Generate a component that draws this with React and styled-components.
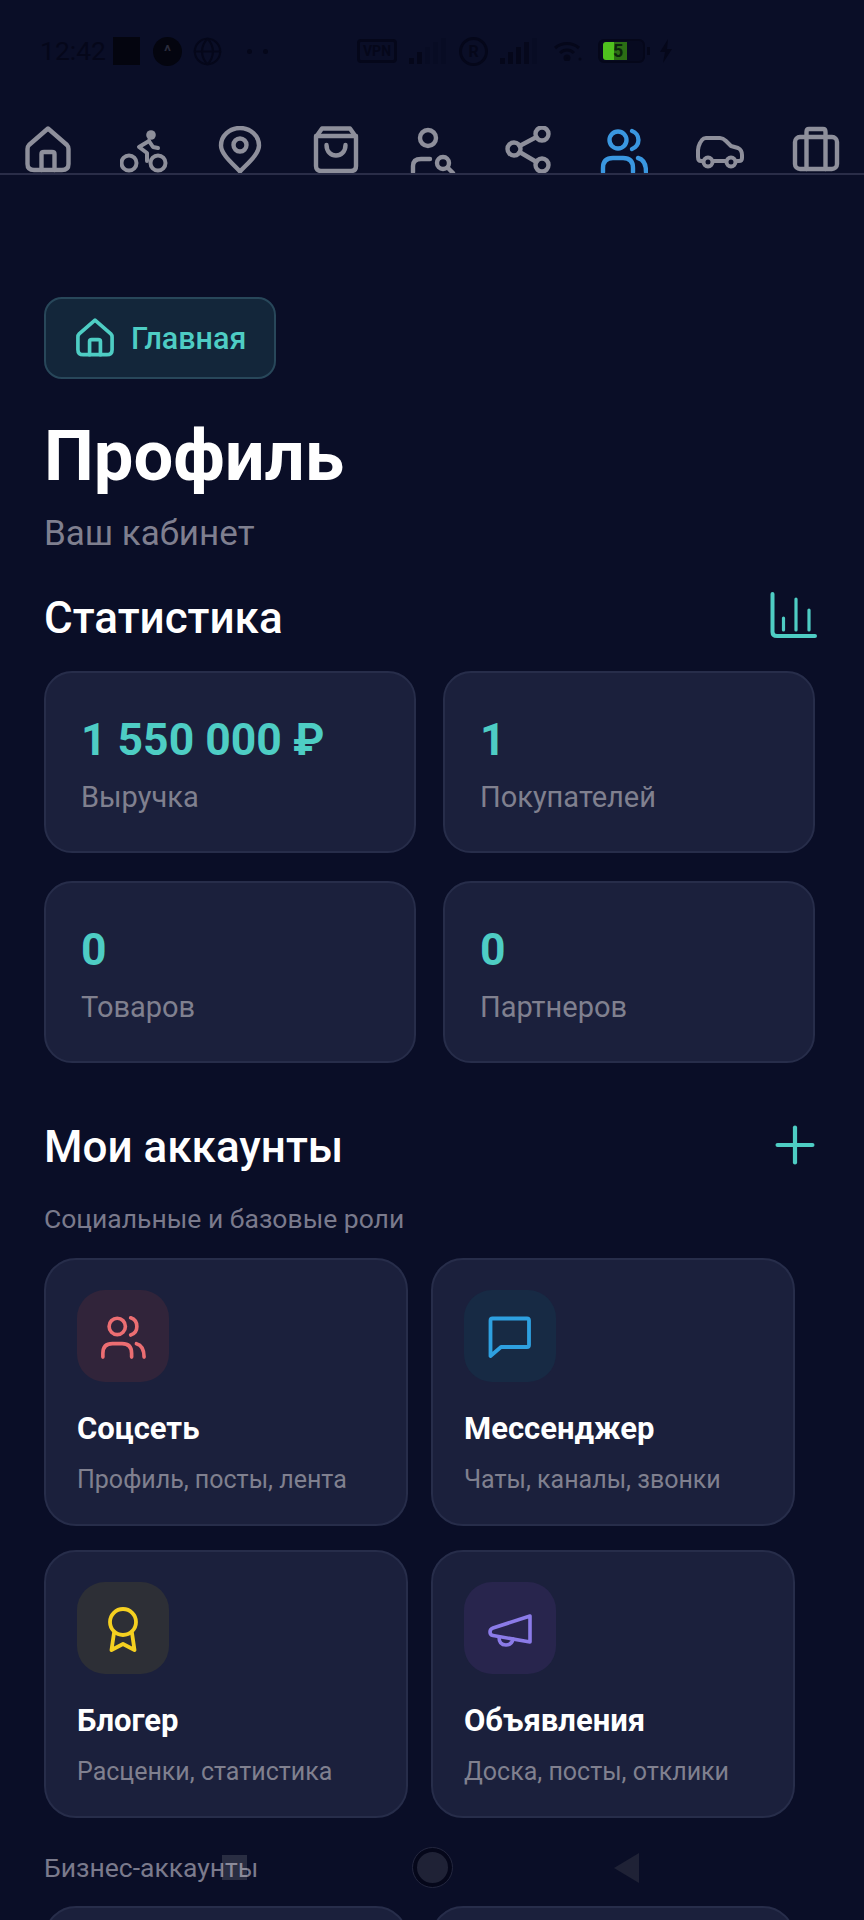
import React from 'react'
import styled, { createGlobalStyle } from 'styled-components'

const GlobalStyle = createGlobalStyle`
  * { box-sizing: border-box; }
  html, body { margin: 0; padding: 0; background: #0a0e27; }
  body { font-family: Roboto, "Liberation Sans", sans-serif; }
`

const Page = styled.div`
  position: relative;
  width: 864px;
  height: 1920px;
  overflow: hidden;
  background: #0a0e27;
  color: #fff;
`

const StatusBar = styled.div`
  display: flex;
  align-items: center;
  height: 30px;
  margin-top: 36px;
  padding-left: 40px;
  color: #05071a;
`

const StatusTime = styled.span`
  width: 66px;
  font-size: 26.5px;
  line-height: 30px;
`

const StatusSquare = styled.div`
  width: 27px;
  height: 28px;
  margin: 0 13px 0 7px;
  background: #04050f;
`

const StatusBadge = styled.div`
  display: flex;
  align-items: center;
  justify-content: center;
  width: 29px;
  height: 29px;
  margin-right: 11px;
  border-radius: 50%;
  background: ${(p) => (p.$solid ? '#04050f' : 'transparent')};
  border: ${(p) => (p.$solid ? 'none' : '3px solid #05071a')};
  color: ${(p) => (p.$solid ? '#2a2c3c' : '#05071a')};
  font-size: 16px;
  font-weight: 700;
`

const StatusDots = styled.div`
  display: flex;
  gap: 11px;
  width: 110px;
  margin-left: 25px;
`

const StatusDot = styled.span`
  width: 5px;
  height: 5px;
  border-radius: 50%;
  background: #05071a;
`

const VpnBox = styled.div`
  display: flex;
  align-items: center;
  justify-content: center;
  width: 40px;
  height: 24px;
  border: 3px solid #05071a;
  border-radius: 4px;
  font-size: 14px;
  font-weight: 700;
`

const Battery = styled.div`
  position: relative;
  display: flex;
  align-items: center;
  width: 47px;
  height: 24px;
  padding: 0 3px;
  border: 2px solid #05071a;
  border-radius: 6px;
  background: #070a20;

  &::after {
    content: '';
    position: absolute;
    right: -7px;
    top: 6px;
    width: 3px;
    height: 8px;
    background: #05071a;
  }
`

const BatteryFill = styled.div`
  width: 24px;
  height: 18px;
  padding-left: 10px;
  border-radius: 3px 0 0 3px;
  background: linear-gradient(90deg, #4fc21e 45%, #2c6e14 45%);
  color: #0b240c;
  font-size: 18px;
  line-height: 18px;
  font-weight: 700;
`

const StatusGap = styled.div`
  width: ${(p) => p.$w}px;
  flex: none;
`

const TabRow = styled.div`
  display: flex;
  height: 49px;
  margin-top: 60px;
  border-bottom: 2px solid #2a2d48;
`

const Tab = styled.div`
  display: flex;
  justify-content: center;
  width: 96px;
  height: 47px;
  overflow: hidden;
  color: ${(p) => (p.$active ? '#3a97e0' : '#8e8f9b')};
`

const Content = styled.main`
  padding: 122px 0 0 44px;
`

const HomeChip = styled.div`
  display: inline-flex;
  align-items: center;
  gap: 16px;
  height: 82px;
  padding: 0 28px 0 29px;
  background: #13263a;
  border: 2px solid #28475a;
  border-radius: 18px;
  color: #4ecdc4;
  font-size: 30.5px;
  font-weight: 500;
`

const Title = styled.h1`
  margin: 37px 0 0;
  font-size: 70.5px;
  line-height: 80px;
  font-weight: 700;
`

const Subtitle = styled.p`
  margin: 18px 0 0;
  font-size: 35px;
  line-height: 40px;
  color: #7f7f8f;
`

const SectionHeader = styled.div`
  display: flex;
  align-items: flex-start;
  justify-content: space-between;
  width: 772px;
  margin-top: ${(p) => p.$top}px;
`

const SectionTitle = styled.h2`
  margin: ${(p) => p.$offset || 0}px 0 0;
  font-size: 44px;
  line-height: 48px;
  font-weight: 500;
`

const HeaderIcon = styled.div`
  display: flex;
  margin-right: ${(p) => p.$right || 0}px;
  color: #4ecdc4;
`

const StatGrid = styled.div`
  display: grid;
  grid-template-columns: 372px 372px;
  gap: 28px 27px;
  margin-top: 29px;
`

const StatCard = styled.div`
  padding: 41px 35px 36px;
  background: #1b203c;
  border: 2px solid #272d4a;
  border-radius: 28px;
`

const StatValue = styled.div`
  font-size: 44.5px;
  line-height: 52px;
  font-weight: 700;
  color: #4ecdc4;
`

const StatLabel = styled.div`
  margin-top: 13px;
  font-size: 29px;
  line-height: 36px;
  color: #80808f;
`

const GroupLabel = styled.div`
  margin-top: ${(p) => p.$top}px;
  font-size: 26.5px;
  line-height: 32px;
  color: #7a7a8c;
`

const AccountGrid = styled.div`
  display: grid;
  grid-template-columns: 364px 364px;
  gap: 24px 23px;
  margin-top: ${(p) => p.$top}px;
`

const AccountCard = styled.div`
  height: ${(p) => (p.$empty ? '100px' : 'auto')};
  padding: 30px 31px 29px;
  background: #1b203c;
  border: 2px solid #272d4a;
  border-radius: 32px;
`

const AccountIcon = styled.div`
  display: flex;
  align-items: center;
  justify-content: center;
  width: 92px;
  height: 92px;
  border-radius: 28px;
  background: ${(p) => p.$bg};
  color: ${(p) => p.$color};
`

const AccountName = styled.div`
  margin-top: 29px;
  font-size: 31px;
  line-height: 36px;
  font-weight: 700;
`

const AccountDesc = styled.div`
  margin-top: 18px;
  font-size: 25px;
  line-height: 30px;
  color: #80808f;
`

const SystemNav = styled.div`
  position: absolute;
  left: 222px;
  bottom: 33px;
  display: flex;
  align-items: center;
`

const NavSquare = styled.div`
  width: 25px;
  height: 25px;
  margin-right: 166px;
  background: rgba(255, 255, 255, 0.13);
`

const NavCircle = styled.div`
  width: 39px;
  height: 39px;
  margin-right: 162px;
  border-radius: 50%;
  background: #1f2236;
  border: 4px solid #05071a;
  outline: 1px solid #23263d;
`

const NavTriangle = styled.div`
  width: 0;
  height: 0;
  border-style: solid;
  border-width: 15px 25px 15px 0;
  border-color: transparent #1f2236 transparent transparent;
`

const Svg = ({ size = 48, sw = 4.4, children }) => (
  <svg
    width={size}
    height={size}
    viewBox="0 0 48 48"
    fill="none"
    stroke="currentColor"
    strokeWidth={sw}
    strokeLinecap="round"
    strokeLinejoin="round"
  >
    {children}
  </svg>
)

const HomeIcon = (props) => (
  <Svg {...props}>
    <path d="M24 2.5 5 19q-1.500 1.500-1.500 4v15q0 6 6.500 6h28q6.500 0 6.500-6V23q0-2.500-1.500-4z" />
    <path d="M17.500 44V28q0-2 2.500-2h8q2.500 0 2.500 2v16" />
  </Svg>
)

const BikeIcon = () => (
  <Svg sw={4}>
    <circle cx="9" cy="37" r="7.500" />
    <circle cx="38" cy="37" r="7.500" />
    <circle cx="31" cy="9" r="4.800" fill="currentColor" stroke="none" />
    <path d="M29 15 19 21l8 6v8" />
    <path d="m29 15 4 6 5 1" />
  </Svg>
)

const PinIcon = () => (
  <Svg>
    <path d="M24 45.500C16 37 5 28 5 19.500a19 17.500 0 0 1 38 0C43 28 32 37 24 45.500z" />
    <circle cx="24" cy="19" r="6.500" />
  </Svg>
)

const BagIcon = () => (
  <Svg>
    <path d="M10 2.500h28L44 11v29q0 5-5 5H9q-5 0-5-5V11z" />
    <path d="M4 10h40" />
    <path d="M14.500 19c0 14 19 14 19 0" />
  </Svg>
)

const UserSearchIcon = () => (
  <Svg>
    <circle cx="20" cy="12" r="8" />
    <path d="M5 46v-6q0-7 8-7h9" />
    <circle cx="35" cy="37" r="6" />
    <path d="m40 42 5 5" />
  </Svg>
)

const ShareIcon = () => (
  <Svg>
    <circle cx="38" cy="8" r="6.500" />
    <circle cx="10" cy="23" r="6.500" />
    <circle cx="38" cy="39" r="6.500" />
    <path d="m15.500 20 17-9" />
    <path d="m15.500 26 17 10" />
  </Svg>
)

const UsersIcon = (props) => (
  <Svg {...props}>
    <circle cx="18" cy="14" r="8.500" />
    <path d="M32 5a9.500 9.500 0 0 1 0 18" />
    <path d="M3 46v-4q0-10 10-10h10q10 0 10 10v4" />
    <path d="M38 32q8 2 8 14" />
  </Svg>
)

const CarIcon = () => (
  <Svg sw={4}>
    <path d="M7 35H5q-3 0-3-4v-7q0-3 2-7l2-3q1.500-2 4-2h14q3 0 6 3l5 5 7 2q4 2 4 7v3q0 3-3 3h-2" />
    <path d="M18 35h11" />
    <circle cx="12" cy="36" r="4.500" />
    <circle cx="35" cy="36" r="4.500" />
  </Svg>
)

const CaseIcon = () => (
  <Svg>
    <rect x="3" y="11" width="42" height="32" rx="5" />
    <path d="M14.500 43V6q0-3 2.500-3h14q2.500 0 2.500 3v37" />
  </Svg>
)

const ChartIcon = () => (
  <Svg sw={3.200}>
    <path d="M2.500 2v38q0 4 4.500 4h38" strokeWidth="4" />
    <path d="M13.500 26v12" />
    <path d="M26 7v31" />
    <path d="M39 18v20" />
  </Svg>
)

const PlusIcon = () => (
  <Svg size={44} sw={4.600}>
    <path d="M24 5v38" />
    <path d="M5 24h38" />
  </Svg>
)

const MessageIcon = () => (
  <Svg sw={3.800}>
    <path d="M6.500 6.500H41q2 0 2 2V33q0 2-2 2H15L4.500 44V8.500q0-2 2-2z" />
  </Svg>
)

const AwardIcon = () => (
  <Svg sw={3.800}>
    <circle cx="24" cy="18" r="13" />
    <path d="M15 29 12.500 46 24 40l11.500 6L33 29" />
  </Svg>
)

const MegaphoneIcon = () => (
  <Svg sw={3.600}>
    <path d="M44 12v26L7 31.500q-3-.5-3-3.500t3-4z" />
    <path d="M13 33q0 8 7 8 6 0 7-6" />
  </Svg>
)

const GlobeIcon = () => (
  <Svg size={29} sw={3.500}>
    <circle cx="24" cy="24" r="21" />
    <path d="M3 24h42M24 3c-12 12-12 30 0 42M24 3c12 12 12 30 0 42" />
  </Svg>
)

const SignalIcon = ({ w = 38, faded }) => (
  <svg width={w} height="26" viewBox="0 0 38 26" fill="#05071a">
    <rect x="1" y="20" width="5" height="6" />
    <rect x="9" y="14" width="5" height="12" />
    <rect x="17" y="9" width="5" height="17" opacity={faded ? 0.25 : 1} />
    <rect x="25" y="4" width="5" height="22" opacity={faded ? 0.25 : 0.8} />
    <rect x="33" y="0" width="5" height="26" opacity="0.25" />
  </svg>
)

const WifiIcon = () => (
  <svg width="30" height="20" viewBox="0 0 30 20" fill="none" stroke="#05071a" strokeWidth="3">
    <path d="M2 7c7-6 17-6 24 0" />
    <path d="M7 12c4-4 10-4 14 0" />
    <circle cx="14" cy="17" r="2" fill="#05071a" />
    <circle cx="27" cy="18" r="1.500" fill="#05071a" stroke="none" />
  </svg>
)

const BoltIcon = () => (
  <svg width="12" height="24" viewBox="0 0 12 24" fill="#05071a">
    <path d="M8 0 0 13h5l-2 11 9-14H7z" />
  </svg>
)

const tabs = [
  { id: 'home', icon: <HomeIcon /> },
  { id: 'bike', icon: <BikeIcon /> },
  { id: 'pin', icon: <PinIcon /> },
  { id: 'bag', icon: <BagIcon /> },
  { id: 'search', icon: <UserSearchIcon /> },
  { id: 'share', icon: <ShareIcon /> },
  { id: 'users', icon: <UsersIcon />, active: true },
  { id: 'car', icon: <CarIcon /> },
  { id: 'case', icon: <CaseIcon /> },
]

const stats = [
  { value: '1 550 000 ₽', label: 'Выручка' },
  { value: '1', label: 'Покупателей' },
  { value: '0', label: 'Товаров' },
  { value: '0', label: 'Партнеров' },
]

const accounts = [
  { name: 'Соцсеть', desc: 'Профиль, посты, лента', bg: '#31243a', color: '#ec6e72', icon: <UsersIcon size={46} sw={3.800} /> },
  { name: 'Мессенджер', desc: 'Чаты, каналы, звонки', bg: '#172a44', color: '#2ea0e0', icon: <MessageIcon /> },
  { name: 'Блогер', desc: 'Расценки, статистика', bg: '#2d2f36', color: '#f5d020', icon: <AwardIcon /> },
  { name: 'Объявления', desc: 'Доска, посты, отклики', bg: '#28254d', color: '#8b7be8', icon: <MegaphoneIcon /> },
]

const App = () => {
  return (
    <Page>
      <GlobalStyle />
      <StatusBar>
        <StatusTime>12:42</StatusTime>
        <StatusSquare />
        <StatusBadge $solid>^</StatusBadge>
        <GlobeIcon />
        <StatusDots>
          <StatusDot />
          <StatusDot />
        </StatusDots>
        <VpnBox>VPN</VpnBox>
        <StatusGap $w={11} />
        <SignalIcon faded />
        <StatusGap $w={13} />
        <StatusBadge>R</StatusBadge>
        <SignalIcon />
        <StatusGap $w={16} />
        <WifiIcon />
        <StatusGap $w={15} />
        <Battery>
          <BatteryFill>5</BatteryFill>
        </Battery>
        <StatusGap $w={15} />
        <BoltIcon />
      </StatusBar>

      <TabRow>
        {tabs.map((t) => (
          <Tab key={t.id} $active={t.active}>
            {t.icon}
          </Tab>
        ))}
      </TabRow>

      <Content>
        <HomeChip>
          <HomeIcon size={40} />
          Главная
        </HomeChip>
        <Title>Профиль</Title>
        <Subtitle>Ваш кабинет</Subtitle>

        <SectionHeader $top={38}>
          <SectionTitle $offset={2}>Статистика</SectionTitle>
          <HeaderIcon $right={-2}>
            <ChartIcon />
          </HeaderIcon>
        </SectionHeader>
        <StatGrid>
          {stats.map((s) => (
            <StatCard key={s.label}>
              <StatValue>{s.value}</StatValue>
              <StatLabel>{s.label}</StatLabel>
            </StatCard>
          ))}
        </StatGrid>

        <SectionHeader $top={60}>
          <SectionTitle>Мои аккаунты</SectionTitle>
          <HeaderIcon $right={-1}>
            <PlusIcon />
          </HeaderIcon>
        </SectionHeader>
        <GroupLabel $top={32}>Социальные и базовые роли</GroupLabel>
        <AccountGrid $top={23}>
          {accounts.map((a) => (
            <AccountCard key={a.name}>
              <AccountIcon $bg={a.bg} $color={a.color}>
                {a.icon}
              </AccountIcon>
              <AccountName>{a.name}</AccountName>
              <AccountDesc>{a.desc}</AccountDesc>
            </AccountCard>
          ))}
        </AccountGrid>
        <GroupLabel $top={34}>Бизнес-аккаунты</GroupLabel>
        <AccountGrid $top={22}>
          <AccountCard $empty />
          <AccountCard $empty />
        </AccountGrid>
      </Content>

      <SystemNav>
        <NavSquare />
        <NavCircle />
        <NavTriangle />
      </SystemNav>
    </Page>
  )
}

export default App
